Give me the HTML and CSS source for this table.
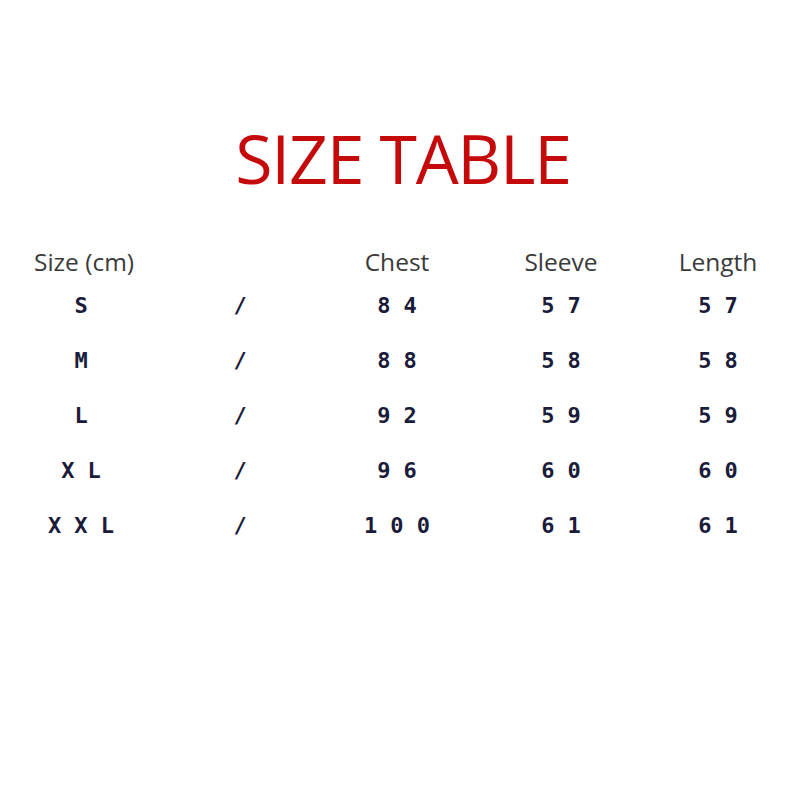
FILE: index.html
```html
<!DOCTYPE html>
<html>
<head>
<meta charset="utf-8">
<link rel="stylesheet" href="styles.css">
</head>
<body>
<div class="page">
  <h1 class="title">SIZE TABLE</h1>
  <div class="table">
    <div class="row head">
      <div class="c c1 left">Size (cm)</div>
      <div class="c c2"></div>
      <div class="c c3">Chest</div>
      <div class="c c4">Sleeve</div>
      <div class="c c5">Length</div>
    </div>
    <div class="row data">
      <div class="c c1">S</div><div class="c c2">/</div><div class="c c3">8 4</div><div class="c c4">5 7</div><div class="c c5">5 7</div>
    </div>
    <div class="row data">
      <div class="c c1">M</div><div class="c c2">/</div><div class="c c3">8 8</div><div class="c c4">5 8</div><div class="c c5">5 8</div>
    </div>
    <div class="row data">
      <div class="c c1">L</div><div class="c c2">/</div><div class="c c3">9 2</div><div class="c c4">5 9</div><div class="c c5">5 9</div>
    </div>
    <div class="row data">
      <div class="c c1">X L</div><div class="c c2">/</div><div class="c c3">9 6</div><div class="c c4">6 0</div><div class="c c5">6 0</div>
    </div>
    <div class="row data">
      <div class="c c1">X X L</div><div class="c c2">/</div><div class="c c3">1 0 0</div><div class="c c4">6 1</div><div class="c c5">6 1</div>
    </div>
  </div>
</div>
</body>
</html>
```

FILE: styles.css
```css
html, body {
  margin: 0;
  padding: 0;
  background: #ffffff;
}
.page {
  width: 800px;
  height: 800px;
  box-sizing: border-box;
  padding-top: 118px;
}
.title {
  margin: 0;
  text-align: center;
  font-family: "Open Sans", sans-serif;
  font-weight: 400;
  font-size: 68px;
  line-height: 80px;
  color: #c40a0a;
  letter-spacing: -1.3px;
  padding-left: 6px;
}
.table {
  margin-top: 47px;
}
.row {
  display: grid;
  grid-template-columns: 162px 156px 158px 170px 144px;
  align-items: center;
}
.head {
  height: 33px;
  font-family: "Open Sans", sans-serif;
  font-size: 24.5px;
  color: #3a3a3a;
}
.data {
  height: 55px;
  font-family: "DejaVu Sans Mono", monospace;
  font-weight: bold;
  font-size: 22px;
  color: #1b1b3a;
}
.c {
  text-align: center;
  white-space: pre;
}
.left {
  text-align: left;
  padding-left: 34px;
}
```
